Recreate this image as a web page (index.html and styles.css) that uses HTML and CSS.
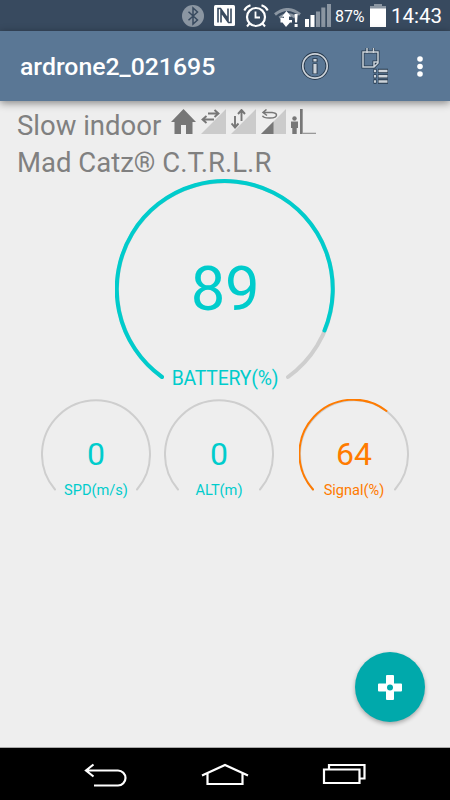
FILE: index.html
```html
<!DOCTYPE html>
<html lang="en">
<head>
    <meta charset="UTF-8">
    <meta name="viewport" content="width=device-width, initial-scale=1.0">
    <title>ardrone2_021695</title>
    <link rel="stylesheet" href="styles.css">
</head>
<body>
    <div class="status-bar">
      <svg class="bluetooth" width="22" height="22" viewBox="0 0 22 22">
        <circle cx="11" cy="11" r="11" fill="#8b96a2"/>
        <path d="M6.5 6.7l9 8.3-4.5 4V3l4.5 4-9 8.3" fill="none" stroke="#384a5f" stroke-width="1.5"/>
      </svg>
      <svg class="nfc" width="21" height="21" viewBox="0 0 21 21">
        <rect width="21" height="21" rx="1.5" fill="#fff"/>
        <path d="M4 17.500V3.500h2.500L14 14V3.500M17 3.500v14h-2.500L7 7v10.500" fill="none" stroke="#384a5f" stroke-width="1.600"/>
      </svg>
      <svg class="alarm" width="26" height="24" viewBox="0 0 26 24">
        <g fill="none" stroke="#fff">
          <circle cx="13" cy="13" r="9" stroke-width="2.2"/>
          <path d="M12.500 7.500v6h4.500" stroke-width="1.800"/>
          <path d="M1.300 6.500Q3 2.800 7.500 1.300M24.700 6.500Q23 2.800 18.500 1.300M6.500 19.500L4 22.500M19.500 19.500l2.500 3" stroke-width="2"/>
        </g>
      </svg>
      <svg class="wifi" width="27" height="20" viewBox="0 0 27 20">
        <path d="M1 6.500Q13.500-3.500 26 6.500M5.500 10Q13.500 3.500 21 9" fill="none" stroke="#8b96a2" stroke-width="3"/>
        <path d="M12.500 3L17 8.500h-2V12h3v2.500h-2L12 19l-3.500-4.500H6.500V10h3.500V8.500H8zM20.500 6h3.200l-.6 8.500h-2zM20.600 16h3v3h-3z" fill="#fff"/>
      </svg>
      <svg class="cell" width="26" height="23" viewBox="0 0 26 23">
        <path d="M0 15h4v8H0zM5.500 11h4v12h-4z" fill="#fff"/>
        <path d="M11 7.500h4V23h-4zM16.300 3.500h4V23h-4zM22 0h4v23h-4z" fill="#8b96a2"/>
      </svg>
      <span class="percent">87%</span>
      <svg class="charge" width="16" height="23" viewBox="0 0 16 23">
        <path d="M4 0h8v2h4v3H0V2h4z" fill="#8b96a2"/>
        <path d="M0 4.500h16V23H0z" fill="#fff"/>
      </svg>
      <span class="clock">14:43</span>
    </div>

    <header>
      <h1>ardrone2_021695</h1>
      <svg class="info" width="28" height="28" viewBox="0 0 28 28">
        <g fill="none" stroke="#26384b" stroke-width="3.400">
          <circle cx="14" cy="14" r="12.200"/>
          <path d="M14 11.500v10.500M14 6.300v3.900" stroke-width="5"/>
        </g>
        <g fill="none" stroke="#ccd3da" stroke-width="1.700">
          <circle cx="14" cy="14" r="12.200"/>
          <path d="M14 12v9.500M14 7v2.500" stroke-width="3.200"/>
        </g>
      </svg>
      <svg class="notes" width="28" height="36" viewBox="0 0 28 36">
        <g fill="none" stroke="#26384b" stroke-width="3">
          <path id="note" d="M2 4h15v11l-4 4H2zM17 14h-4v5M6 0v5M12.500 0v5"/>
          <path d="M12.500 23h3M17 23h10M12.500 28.300h3M17 28.300h10M12.500 33.500h3M17 33.500h10" stroke-width="4.300"/>
        </g>
        <g fill="none" stroke="#ccd3da" stroke-width="1.500">
          <use href="#note"/>
          <path d="M13 23h2M17.500 23h9M13 28.300h2M17.500 28.300h9M13 33.500h2M17.500 33.500h9" stroke-width="2.400"/>
        </g>
      </svg>
      <svg class="more" width="6" height="21" viewBox="0 0 6 21">
        <g fill="#fff">
          <circle cx="3" cy="3" r="2.800"/>
          <circle cx="3" cy="10.500" r="2.800"/>
          <circle cx="3" cy="18" r="2.800"/>
        </g>
      </svg>
    </header>

    <main>
      <div class="mode">
        <span>Slow indoor</span>
        <svg class="home" width="25" height="26" viewBox="0 0 25 26">
          <path d="M12.500 0L25 13h-3.500v12H15v-9h-5v9H3.500V13H0z" fill="#777"/>
        </svg>
        <svg width="25" height="26" viewBox="0 0 25 26">
          <path d="M25 0v25H0z" fill="#cbcbcb"/>
          <path d="M7 4.500h11M13.500 1l4 3.500-4 3.500M13 10.500H1.500M5.500 7l-4 3.500 4 3.500" fill="none" stroke="#777" stroke-width="1.900"/>
        </svg>
        <svg width="25" height="26" viewBox="0 0 25 26">
          <path d="M25 0v25H0z" fill="#cbcbcb"/>
          <path d="M10.500 12V1M7 5l3.500-4L14 5M4 7v11.500M.5 14.500l3.500 4 3.500-4" fill="none" stroke="#777" stroke-width="1.900"/>
        </svg>
        <svg width="25" height="26" viewBox="0 0 25 26">
          <path d="M25 0v25H0z" fill="#cbcbcb"/>
          <path d="M12.500 12.500V25H0z" fill="#777"/>
          <path d="M2 3.500h9q4.500.5 4.500 2.500c0 4-12.500 4-14 .8M5.500 .5L2 3.500l4 3" fill="none" stroke="#777" stroke-width="1.500"/>
        </svg>
        <svg width="25" height="26" viewBox="0 0 25 26">
          <path d="M9 0h2.700v25H9z" fill="#777"/>
          <path d="M11.700 23.700H25V25H11.700z" fill="#999"/>
          <circle cx="3.500" cy="9.500" r="2.200" fill="#777"/>
          <path d="M0 12.500h7V19H5.700v6H1.300v-6H0z" fill="#777"/>
        </svg>
      </div>
      <div class="controller">Mad Catz® C.T.R.L.R</div>

      <svg class="gauge battery" width="220" height="212" viewBox="0 0 220 212">
        <path class="track" d="M47 198A108 108 0 1 1 173 198"/>
        <path class="value" d="M47 198A108 108 0 1 1 209.500 151.500"/>
        <text class="number" x="110" y="131">89</text>
        <text class="label" x="110" y="206">BATTERY(%)</text>
      </svg>

      <div class="gauges">
        <svg class="gauge" width="110" height="104" viewBox="0 0 110 104">
          <path class="track" d="M14 90.500A54 54 0 1 1 96 90.500"/>
          <text class="number" x="55" y="66">0</text>
          <text class="label" x="55" y="95.500">SPD(m/s)</text>
        </svg>
        <svg class="gauge" width="110" height="104" viewBox="0 0 110 104">
          <path class="track" d="M14 90.500A54 54 0 1 1 96 90.500"/>
          <text class="number" x="55" y="66">0</text>
          <text class="label" x="55" y="95.500">ALT(m)</text>
        </svg>
        <svg class="gauge signal" width="110" height="104" viewBox="0 0 110 104">
          <path class="track" d="M14 90.500A54 54 0 1 1 96 90.500"/>
          <path class="value" d="M14 90.500A54 54 0 0 1 87.500 12"/>
          <text class="number" x="55" y="66">64</text>
          <text class="label" x="55" y="95.500">Signal(%)</text>
        </svg>
      </div>

      <button class="fab">
        <svg width="24" height="25" viewBox="0 0 24 25">
          <path d="M9 0h6q1 0 1 1v7.500h7q1 0 1 1v6q0 1-1 1h-7V24q0 1-1 1H9q-1 0-1-1v-7.500H1q-1 0-1-1v-6q0-1 1-1h7V1q0-1 1-1z" fill="#fff"/>
          <circle cx="12" cy="12.500" r="3" fill="#00a9ab"/>
        </svg>
      </button>
    </main>

    <nav>
      <svg class="back" width="44" height="26" viewBox="0 0 44 26">
        <path d="M9.500 1.500L2 7.500l7.500 6M2.500 7.500H34a7.500 7.500 0 0 1 0 15H10"/>
      </svg>
      <svg class="home-key" width="48" height="24" viewBox="0 0 48 24">
        <path d="M1 12.500L24 2l23 10.500M6.500 10.500V21h35V10.500"/>
      </svg>
      <svg class="recent" width="44" height="22" viewBox="0 0 44 22">
        <path d="M2 6.500h35.500v13.500H2zM7 6V2h35.500v13.500H38"/>
      </svg>
    </nav>
</body>
</html>
```
FILE: styles.css
```css
* {
    box-sizing: border-box;
  }

  :root {
    --status: #384a5f;
    --bar: #5a7795;
    --bg: #eee;
    --text: #808080;
    --primary: #00cccc;
    --accent: #ff7b00;
    --track: #cecece;
  }

  body {
    display: flex;
    flex-direction: column;
    height: 800px;
    margin: 0;
    overflow: hidden;
    font-family: Roboto, sans-serif;
    background-color: var(--bg);
    color: var(--text);
  }

  svg {
    display: block;
    flex: none;
  }

  .status-bar {
    display: flex;
    align-items: flex-start;
    height: 31px;
    padding: 4px 0 0 182px;
    background-color: var(--status);
    color: #fff;
    white-space: nowrap;
  }

  .bluetooth {
    margin: 1px 10px 0 0;
  }

  .nfc {
    margin: 1px 8px 0 0;
  }

  .alarm {
    margin-right: 5px;
  }

  .wifi {
    margin: 4px 4px 0 0;
  }

  .percent {
    width: 34px;
    margin-left: 4px;
    font-size: 16px;
    line-height: 25px;
    letter-spacing: -0.1px;
  }

  .charge {
    margin-left: 1px;
  }

  .clock {
    margin-left: 5px;
    font-size: 20.5px;
    line-height: 25px;
  }

  header {
    position: relative;
    display: flex;
    align-items: center;
    height: 70px;
    padding: 0 27px 0 20px;
    background-color: var(--bar);
    box-shadow: 0 2px 8px rgba(0, 0, 0, 0.45);
  }

  h1 {
    flex: 1;
    margin: 1px 0 0;
    color: #fff;
    font-size: 24.8px;
    font-weight: 500;
  }

  .info {
    margin-right: 32px;
  }

  .notes {
    margin-right: 28px;
    overflow: visible;
  }

  main {
    display: flex;
    flex: 1;
    flex-direction: column;
  }

  .mode {
    display: flex;
    gap: 5px;
    height: 43px;
    padding: 8px 0 0 17px;
    font-size: 27.5px;
    line-height: 34px;
  }

  .mode span {
    width: 149px;
  }

  .controller {
    height: 35px;
    padding-left: 17px;
    font-size: 27.5px;
    line-height: 37px;
  }

  .gauge {
    font-size: 14.6px;

    & path {
      fill: none;
      stroke-width: 2;
      stroke-linecap: round;
    }

    & .track {
      stroke: var(--track);
    }

    & .value {
      stroke: var(--primary);
    }

    & text {
      fill: var(--primary);
      text-anchor: middle;
    }

    & .number {
      font-size: 32px;
    }
  }

  .battery {
    align-self: center;
    font-size: 19.4px;
    letter-spacing: -0.2px;

    & path {
      stroke-width: 4;
    }

    & .number {
      font-size: 61.5px;
    }
  }

  .signal {
    margin-left: 13px;

    & .value {
      stroke: var(--accent);
    }

    & text {
      fill: var(--accent);
    }
  }

  .gauges {
    display: flex;
    gap: 12.5px;
    margin-top: 8px;
    padding-left: 41px;
  }

  .fab {
    display: grid;
    place-items: center;
    align-self: flex-end;
    width: 70px;
    height: 70px;
    margin: auto 25px 25px 0;
    padding: 0;
    border: 0;
    border-radius: 50%;
    background-color: #00a9ab;
    box-shadow: 0 2px 4px rgba(0, 0, 0, 0.3);
  }

  nav {
    display: flex;
    align-items: flex-start;
    height: 53px;
    padding: 15px 0 0 84px;
    border-top: 1px solid #aaa;
    background-color: #000;

    & path {
      fill: none;
      stroke: #fff;
      stroke-width: 2.2;
    }
  }

  .home-key {
    margin: 0 73px;
  }
```
